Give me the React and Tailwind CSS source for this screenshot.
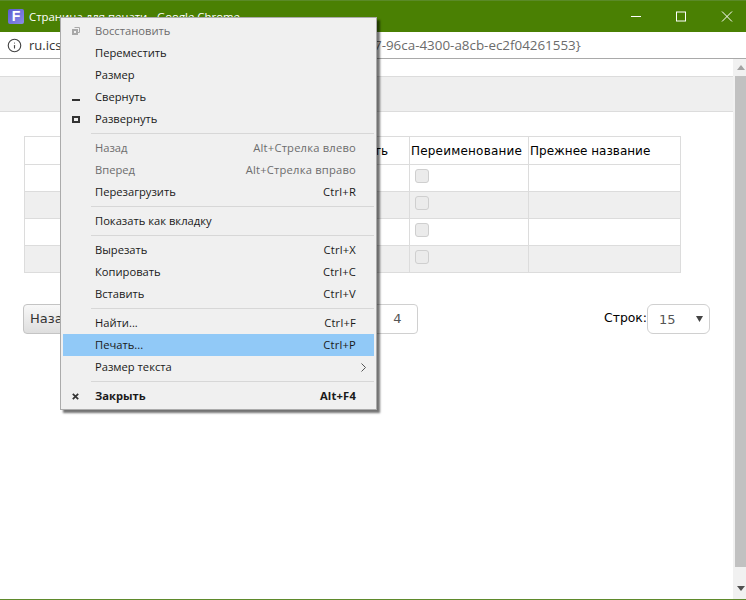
import React from 'react'
import { Info } from 'lucide-react'

const menuRows = [
  { label: 'Восстановить', disabled: true, icon: 'restore' },
  { label: 'Переместить' },
  { label: 'Размер' },
  { label: 'Свернуть', icon: 'min' },
  { label: 'Развернуть', icon: 'max' },
  { sep: true },
  { label: 'Назад', hint: 'Alt+Стрелка влево', disabled: true },
  { label: 'Вперед', hint: 'Alt+Стрелка вправо', disabled: true },
  { label: 'Перезагрузить', hint: 'Ctrl+R' },
  { sep: true },
  { label: 'Показать как вкладку' },
  { sep: true },
  { label: 'Вырезать', hint: 'Ctrl+X' },
  { label: 'Копировать', hint: 'Ctrl+C' },
  { label: 'Вставить', hint: 'Ctrl+V' },
  { sep: true },
  { label: 'Найти...', hint: 'Ctrl+F' },
  { label: 'Печать...', hint: 'Ctrl+P', active: true },
  { label: 'Размер текста', arrow: true },
  { sep: true },
  { label: 'Закрыть', hint: 'Alt+F4', bold: true, icon: 'close' }
]

const MenuIcon = ({ type }) => {
  if (type === 'restore') {
    return (
      <svg width="8" height="8" viewBox="0 0 8 8" className="text-[#a8a8a8]">
        <path d="M2.5 .5h5v5h-2" fill="none" stroke="currentColor" />
        <rect x="1" y="3" width="4" height="4" fill="none" stroke="currentColor" strokeWidth="2" />
      </svg>
    )
  }
  if (type === 'min') {
    return <div className="w-2 h-[2px] bg-[#333] mt-[5px]" />
  }
  if (type === 'max') {
    return <div className="w-2 h-[7px] border-2 border-[#333]" />
  }
  if (type === 'close') {
    return (
      <svg width="7" height="7" viewBox="0 0 7 7">
        <path d="M.8 .8l5.4 5.4M6.2 .8L.8 6.2" stroke="#333" strokeWidth="1.7" />
      </svg>
    )
  }
  return null
}

const SystemMenu = () => (
  <div className="absolute left-[60px] top-[17px] w-[317px] h-[393px] bg-[#f0f0f0] border border-[#ababab] py-[2px] px-[2px] shadow-[3px_3px_2px_rgba(0,0,0,0.55)] font-['Open_Sans',sans-serif] text-[11.2px]">
    {menuRows.map((row, i) => {
      if (row.sep) {
        return (
          <div key={i} className="h-[7px] flex items-center pl-[28px]">
            <div className="w-full h-px bg-[#d7d7d7]" />
          </div>
        )
      }
      return (
        <div
          key={i}
          className={`h-[22px] flex items-center ${row.active ? 'bg-[#91c9f7]' : ''} ${row.disabled ? 'text-[#6d6d6d]' : 'text-[#1a1a1a]'} ${row.bold ? 'font-bold' : ''}`}
        >
          <div className="w-[32px] flex pl-[9px] shrink-0">
            {row.icon && <MenuIcon type={row.icon} />}
          </div>
          <span>{row.label}</span>
          {row.hint && <span className="ml-auto mr-[18px] tracking-[0.2px]">{row.hint}</span>}
          {row.arrow && (
            <svg width="5" height="9" viewBox="0 0 5 9" className="ml-auto mr-[8px]">
              <path d="M.5 .5l4 4-4 4" fill="none" stroke="#555" />
            </svg>
          )}
        </div>
      )
    })}
  </div>
)

const tableRows = [0, 1, 2, 3]

const App = () => {
  return (
    <div className="relative w-[746px] h-[600px] overflow-hidden bg-white flex flex-col font-['Open_Sans',sans-serif]">
      {/* title bar */}
      <div className="h-[32px] shrink-0 bg-[#4a8003] border-t border-[#5a8a28] flex items-center pl-[8px] text-white">
        <div className="w-[16px] h-[15px] rounded-[2px] bg-gradient-to-br from-[#5a5ad0] to-[#8c8ce6] flex items-center justify-center text-[14px] font-bold font-['Liberation_Sans',sans-serif]">F</div>
        <span className="ml-[5px] text-[11.4px]">Страница для печати - Google Chrome</span>
        <div className="ml-auto flex items-center">
          <svg width="46" height="20" viewBox="0 0 46 20"><path d="M5 9.5h10" stroke="#fff" /></svg>
          <svg width="46" height="20" viewBox="0 0 46 20"><rect x="4.5" y="5" width="9" height="9" fill="none" stroke="#fff" /></svg>
          <svg width="28" height="20" viewBox="0 0 28 20"><path d="M4 4.5l10 10M14 4.5l-10 10" stroke="#fff" /></svg>
        </div>
      </div>

      {/* address bar */}
      <div className="h-[27px] shrink-0 bg-white border-b border-[#a9a9a9] flex items-center pl-[7px] text-[13px] text-[#333]">
        <Info size={15} strokeWidth={1.8} className="text-[#444]" />
        <span className="ml-[7px] pt-[1px]">ru.icsm</span>
        <span className="absolute left-[374px] pt-[1px] text-[13.4px] text-[#6b6b6b]">7-96ca-4300-a8cb-ec2f04261553&#125;</span>
      </div>

      <div className="flex-1 flex min-h-0">
        {/* page */}
        <div className="flex-1 min-w-0">
          <div className="h-[17px]" />
          <div className="h-[36px] bg-[#efefef] border-y border-[#dcdcdc]" />

          <table className="mt-[24px] ml-[24px] w-[656px] table-fixed border-collapse font-['DejaVu_Sans',sans-serif] text-[12px] text-black">
            <colgroup>
              <col className="w-[385px]" />
              <col className="w-[119px]" />
              <col className="w-[152px]" />
            </colgroup>
            <thead>
              <tr className="h-[28px]">
                <th className="border border-[#dcdcdc] font-normal text-right pr-[21px]">ть</th>
                <th className="border border-[#dcdcdc] font-normal text-left pl-[1px] whitespace-nowrap tracking-[0.2px]">Переименование</th>
                <th className="border border-[#dcdcdc] font-normal text-left pl-[1px] whitespace-nowrap">Прежнее название</th>
              </tr>
            </thead>
            <tbody>
              {tableRows.map((r) => (
                <tr key={r} className={`h-[27px] ${r % 2 === 1 ? 'bg-[#efefef]' : ''}`}>
                  <td className="border border-[#dcdcdc]" />
                  <td className="border border-[#dcdcdc] pl-[5px] align-top pt-[4px]">
                    <div className="w-[14px] h-[14px] rounded-[3px] border border-[#cfcfcf] bg-[#ebebeb]" />
                  </td>
                  <td className="border border-[#dcdcdc]" />
                </tr>
              ))}
            </tbody>
          </table>

          <div className="mt-[31px] ml-[23px] w-[687px] flex items-center font-['DejaVu_Sans',sans-serif] text-[13px] text-[#333]">
            <div className="w-[60px] h-[30px] rounded-l-[4px] border border-[#c4c4c4] bg-gradient-to-b from-[#f8f8f8] to-[#dedede] pl-[6px] flex items-center">Назад</div>
            <div className="ml-[292px] w-[43px] h-[30px] rounded-r-[4px] border border-[#d0d0d0] flex items-center justify-center pl-[2px] text-[#555]">4</div>
            <span className="ml-auto pb-[2px] text-[12.4px] text-black">Строк:</span>
            <div className="w-[63px] h-[30px] rounded-[6px] border border-[#d0d0d0] flex items-center pl-[11px] pt-[2px] text-[#555]">
              15
              <svg width="7" height="6" viewBox="0 0 7 6" className="ml-auto mr-[6px] mb-[2px]"><path d="M0 0h7L3.5 6z" fill="#444" /></svg>
            </div>
          </div>
        </div>

        {/* scrollbar, cut off by the window edge */}
        <div className="w-[13px] shrink-0 bg-[#f1f1f1] flex flex-col">
          <div className="h-[17px] shrink-0 flex items-center justify-end pr-[1px]">
            <svg width="8" height="5" viewBox="0 0 8 5"><path d="M4 0l4 5H0z" fill="#a3a3a3" /></svg>
          </div>
          <div className="w-full flex-1 pl-[2px]"><div className="h-full bg-[#c1c1c1]" /></div>
          <div className="h-[32px] shrink-0 flex items-end justify-end pr-[1px] pb-[8px]">
            <svg width="8" height="5" viewBox="0 0 8 5"><path d="M0 0h8L4 5z" fill="#505050" /></svg>
          </div>
        </div>
      </div>

      <div className="h-px shrink-0 bg-[#5f8a2c]" />
      <SystemMenu />
    </div>
  )
}

export default App
